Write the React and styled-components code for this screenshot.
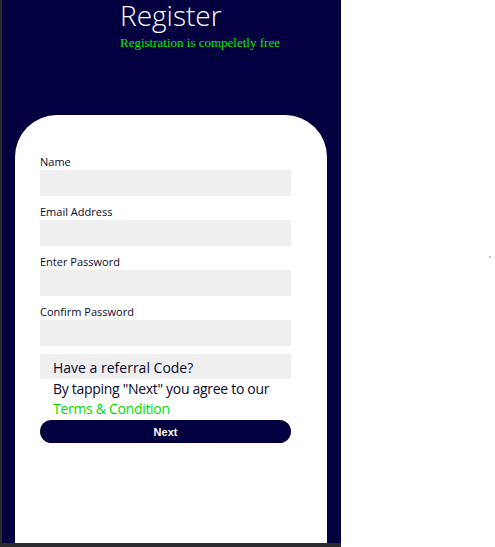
import React from "react";
import styled, { createGlobalStyle } from "styled-components";

const Global = createGlobalStyle`
  html, body { margin: 0; padding: 0; background: #ffffff; }
  body { width: 495px; height: 547px; overflow: hidden; }
`;

const Page = styled.div`
  position: relative;
  width: 495px;
  height: 547px;
  display: flex;
`;

const Frame = styled.div`
  width: 341px;
  height: 547px;
  background: #2b2b30;
  display: flex;
  padding: 0 0 4px 2px;
  box-sizing: border-box;
`;

const Panel = styled.div`
  flex: 1;
  background: #02003e;
  display: flex;
  flex-direction: column;
  align-items: stretch;
`;

const Header = styled.header`
  padding-left: 118px;
  padding-top: 2px;
  height: 115px;
  box-sizing: border-box;
`;

const Title = styled.h1`
  margin: 0;
  font-family: "Open Sans", "Noto Sans", sans-serif;
  font-weight: 300;
  font-size: 28px;
  line-height: 26px;
  color: #ffffff;
`;

const Sub = styled.p`
  margin: 6px 0 0 0;
  font-family: "Liberation Serif", serif;
  font-size: 13px;
  line-height: 18px;
  color: #00ee00;
`;

const Card = styled.main`
  flex: 1;
  margin: 0 14px 0 13px;
  background: #ffffff;
  border-radius: 42px 42px 0 0;
  padding: 39px 36px 0 25px;
  display: flex;
  flex-direction: column;
`;

const Field = styled.div`
  display: flex;
  flex-direction: column;
  margin-bottom: 8px;
`;

const Label = styled.label`
  font-family: "Open Sans", "Noto Sans", sans-serif;
  font-size: 11px;
  line-height: 15px;
  margin-bottom: 1px;
  color: #0a0a2e;
`;

const Input = styled.div`
  height: 26px;
  background: #efefef;
`;

const Referral = styled.div`
  height: 25px;
  background: #efefef;
  padding-left: 13px;
  display: flex;
  align-items: flex-end;
  font-family: "Open Sans", "Noto Sans", sans-serif;
  font-size: 14px;
  line-height: 22px;
  color: #0a0a2e;
`;

const Agree = styled.p`
  margin: 0;
  padding-left: 13px;
  font-family: "Open Sans", "Noto Sans", sans-serif;
  font-size: 14px;
  line-height: 20px;
  letter-spacing: -0.3px;
  color: #0a0a2e;
`;

const Terms = styled.span`
  display: block;
  color: #00dd00;
`;

const Button = styled.button`
  margin-top: 1px;
  height: 23px;
  border: none;
  border-radius: 12px;
  background: #02003e;
  color: #ffffff;
  font-family: "Liberation Sans", Arial, sans-serif;
  font-weight: 700;
  font-size: 11px;
  padding: 0;
`;

const Dot = styled.span`
  position: absolute;
  left: 489px;
  top: 256px;
  width: 2px;
  height: 2px;
  border-radius: 50%;
  background: #b8b8b8;
`;

const fields = ["Name", "Email Address", "Enter Password", "Confirm Password"];

export default function App() {
  return (
    <Page>
      <Global />
      <Frame>
        <Panel>
          <Header>
            <Title>Register</Title>
            <Sub>Registration is compeletly free</Sub>
          </Header>
          <Card>
            {fields.map((f) => (
              <Field key={f}>
                <Label>{f}</Label>
                <Input />
              </Field>
            ))}
            <Referral>Have a referral Code?</Referral>
            <Agree>
              By tapping "Next" you agree to our
              <Terms>Terms &amp; Condition</Terms>
            </Agree>
            <Button>Next</Button>
          </Card>
        </Panel>
      </Frame>
      <Dot />
    </Page>
  );
}
